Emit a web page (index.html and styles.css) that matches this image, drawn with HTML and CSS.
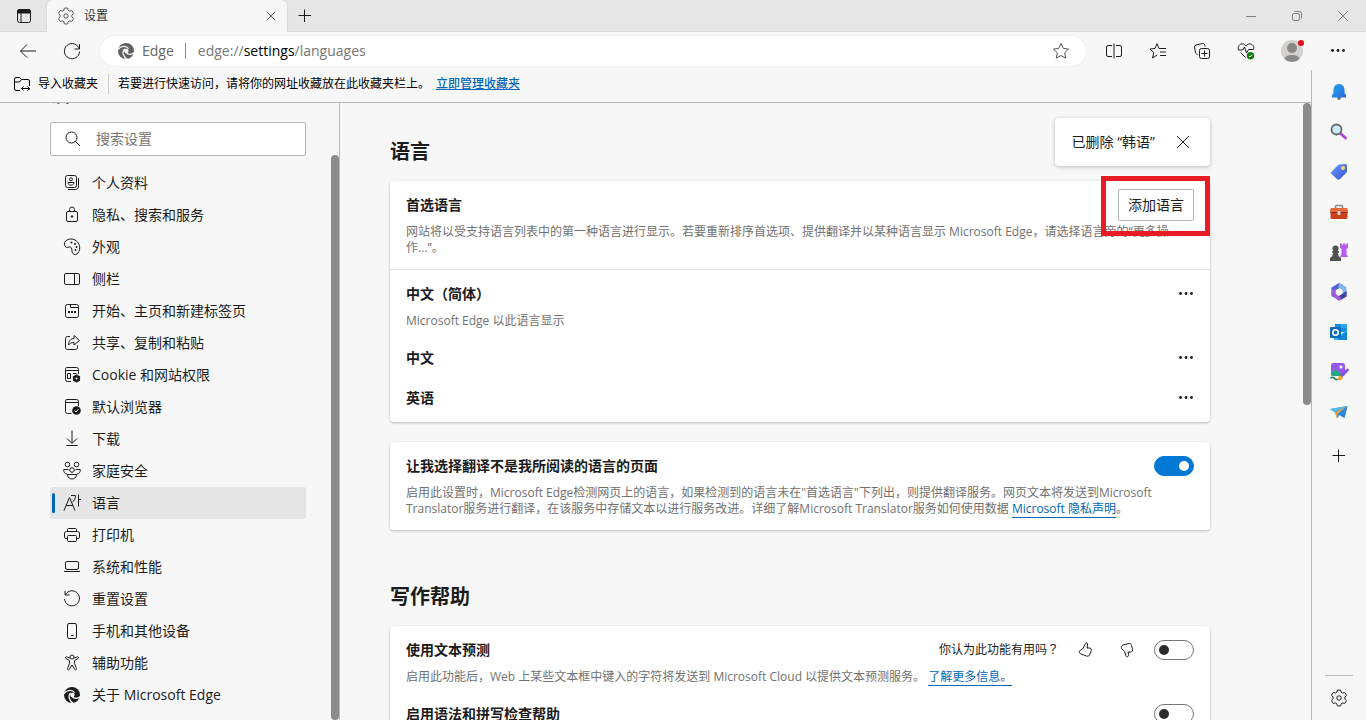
FILE: index.html
```html
<!DOCTYPE html>
<html lang="zh-CN">
<head>
<meta charset="utf-8">
<title>设置</title>
<link rel="stylesheet" href="styles.css">
</head>
<body>
<svg class="defs" aria-hidden="true">
  <symbol id="gear" viewBox="0 0 20 20"><path d="M8.3 2.2 Q10 1.8 11.7 2.2 L12.2 4.3 L13.6 5.1 L15.7 4.5 Q16.9 5.8 17.4 7.4 L15.9 9 V11 L17.4 12.6 Q16.9 14.2 15.7 15.5 L13.6 14.9 L12.2 15.7 L11.7 17.8 Q10 18.2 8.3 17.8 L7.8 15.7 L6.4 14.9 L4.3 15.5 Q3.1 14.2 2.6 12.6 L4.1 11 V9 L2.6 7.4 Q3.1 5.8 4.3 4.5 L6.4 5.1 L7.8 4.3 Z"/><circle cx="10" cy="10" r="2.2"/></symbol>
  <symbol id="dots" viewBox="0 0 20 20"><g fill="currentColor" stroke="none"><circle cx="4.5" cy="9.5" r="1.4"/><circle cx="10" cy="9.5" r="1.4"/><circle cx="15.5" cy="9.5" r="1.4"/></g></symbol>
  <symbol id="edge" viewBox="0 0 20 20"><circle cx="10" cy="10" r="8" fill="currentColor" stroke="none"/><path d="M2 8.5 C5 4.6 10.5 4.4 12.6 7.6 M8.6 8 C5.7 11 7 15.5 11.5 18.6 M10.2 11.3 C12 14.2 15.5 13.8 18.6 11.4" fill="none" stroke="#f7f7f7" stroke-width="1.3"/><path d="M8.2 9.6 C8.6 7.2 12.2 7 12.6 9.6 C12.7 11 11.6 11.5 11.7 12.6 C9.6 13 8.1 11.6 8.2 9.6Z" fill="#f7f7f7" stroke="none"/></symbol>
  <symbol id="plus" viewBox="0 0 20 20"><path d="M9.500 3.500V16M3.500 9.500H16"/></symbol>
  <symbol id="cross" viewBox="0 0 20 20"><path d="M4 4L16 16M16 4L4 16"/></symbol>
</svg>

<header class="titlebar">
  <button class="tab-menu" aria-label="标签页操作"><svg class="icon" viewBox="0 0 20 20"><rect x="3.500" y="3.500" width="13" height="13" rx="2"/><path d="M3.500 7V5.500A2 2 0 0 1 5.500 3.500H14.500A2 2 0 0 1 16.500 5.500V7Z" fill="currentColor"/><path d="M7 7V16.500"/></svg></button>
  <div class="tab">
    <svg class="icon soft"><use href="#gear"/></svg>
    <span class="tab-title">设置</span>
    <button class="tab-close" aria-label="关闭标签页"><svg class="icon small"><use href="#cross"/></svg></button>
  </div>
  <button class="new-tab" aria-label="新建标签页"><svg class="icon"><use href="#plus"/></svg></button>
  <div class="window-buttons">
    <button aria-label="最小化"><svg class="icon" viewBox="0 0 20 20"><path d="M5 10.500H15"/></svg></button>
    <button aria-label="还原"><svg class="icon" viewBox="0 0 20 20"><rect x="5.500" y="7.500" width="7" height="7" rx="1.500"/><path d="M7.500 5.500H12.500A2 2 0 0 1 14.500 7.500V12.500"/></svg></button>
    <button aria-label="关闭"><svg class="icon" viewBox="0 0 20 20"><path d="M5 5L15 15M15 5L5 15"/></svg></button>
  </div>
</header>

<div class="toolbar">
  <button class="tool" aria-label="返回"><svg class="icon" viewBox="0 0 20 20"><path d="M18 10H2.500M9 3.500L2.500 10L9 16.500"/></svg></button>
  <button class="tool" aria-label="刷新"><svg class="icon" viewBox="0 0 20 20"><path d="M17.300 8A7.600 7.600 0 1 0 17.600 10.500M17.500 3V8H12.500"/></svg></button>
  <div class="address">
    <svg class="icon gray"><use href="#edge"/></svg>
    <span class="site">Edge</span>
    <a class="url" href="edge://settings/languages">edge://<b>settings</b>/languages</a>
    <button class="star" aria-label="收藏"><svg class="icon soft" viewBox="0 0 20 20"><path d="M10 2.500L12.300 7.400L17.600 8.100L13.700 11.800L14.700 17.100L10 14.500L5.300 17.100L6.300 11.800L2.400 8.100L7.700 7.400Z"/></svg></button>
  </div>
  <button class="tool" aria-label="拆分窗口"><svg class="icon" viewBox="0 0 20 20"><path d="M10 2.500V17.500M8 4.500H4A1.500 1.500 0 0 0 2.500 6V14A1.500 1.500 0 0 0 4 15.500H8M12 4.500H16A1.500 1.500 0 0 1 17.500 6V14A1.500 1.500 0 0 1 16 15.500H12"/></svg></button>
  <button class="tool" aria-label="收藏夹"><svg class="icon" viewBox="0 0 20 20"><path d="M12 7.500H11L9 2.700L7 7.500L2 8L5.800 11.500L4.500 17L9 14M12 7.500H18M12 11H18M12 14.500H18"/></svg></button>
  <button class="tool" aria-label="集锦"><svg class="icon" viewBox="0 0 20 20"><path d="M5.500 13.500L4.500 13A2 2 0 0 1 3.500 11.500L2.500 6A2 2 0 0 1 4 4L10.500 2.500A2 2 0 0 1 12.800 4L13.100 5.500"/><rect x="7.500" y="7.500" width="10" height="10" rx="2"/><path d="M12.500 9.500V15.500M9.500 12.500H15.500"/></svg></button>
  <button class="tool" aria-label="浏览器概要"><svg class="icon" viewBox="0 0 20 20"><path d="M10 5C8 2 4.500 2.500 3 4.500C2 6 2 7.500 2.500 9H6.500L8.500 6L10.500 12L12.500 8.500H17.500C18 7 18 5.500 17 4.500C15.500 2.500 12 2 10 5ZM4.500 11.500L9.500 16.500"/><circle cx="14.500" cy="14.800" r="3.700" fill="#107c10" stroke="none"/><path d="M13 15L14 16L16 13.700" stroke="#fff"/></svg></button>
  <button class="tool profile" aria-label="个人资料"><svg class="avatar" viewBox="0 0 26 26"><circle cx="13" cy="13" r="11" fill="#d2d0ce"/><circle cx="13" cy="10" r="5" fill="#8a8886"/><path d="M5.500 21C6.500 15.500 19.500 15.500 20.500 21A11 11 0 0 1 5.500 21Z" fill="#8a8886"/><circle cx="22" cy="5" r="3" fill="#e00b1c"/></svg></button>
  <button class="tool profile" aria-label="设置及其他"><svg class="icon"><use href="#dots"/></svg></button>
</div>

<div class="workspace">
  <div class="page">
    <div class="favorites">
      <button class="import"><svg class="icon" viewBox="0 0 20 20"><path d="M8 16.500H4A1.500 1.500 0 0 1 2.500 15V5A1.500 1.500 0 0 1 4 3.500H7.500L9.500 5.500H16A1.500 1.500 0 0 1 17.500 7V12M2.500 8H7.500L9.500 5.500M17.500 14V15.500M9.500 14.500H17M11.500 12.500L9.500 14.500L11.500 16.500M15.500 12.500L17.500 14.500L15.500 16.500"/></svg>导入收藏夹</button>
      <span class="hint">若要进行快速访问，请将你的网址收藏放在此收藏夹栏上。</span>
      <a href="#favorites">立即管理收藏夹</a>
    </div>

    <div class="settings">
      <nav class="nav">
        <div class="nav-inner">
          <h2 class="nav-title">设置</h2>
          <label class="search"><svg class="icon" viewBox="0 0 20 20"><circle cx="8.500" cy="8.500" r="5.500"/><path d="M12.500 12.500L17 17"/></svg><input type="text" placeholder="搜索设置" aria-label="搜索设置"></label>
          <ul class="nav-list">
            <li><a href="#profiles"><svg class="icon" viewBox="0 0 20 20"><rect x="3.500" y="2.500" width="11" height="12" rx="2"/><path d="M16.500 5V14A3 3 0 0 1 13.500 16.500H6"/><circle cx="9" cy="6.300" r="1.500"/><path d="M6 9.500H12V10.500Q9 14 6 10.500Z"/></svg>个人资料</a></li>
            <li><a href="#privacy"><svg class="icon" viewBox="0 0 20 20"><rect x="4.500" y="6.500" width="11" height="10" rx="1.500"/><path d="M7.500 6.500V4.500A2.500 2.500 0 0 1 12.500 4.500V6.500"/><circle cx="10" cy="11.500" r=".8" fill="currentColor"/></svg>隐私、搜索和服务</a></li>
            <li><a href="#appearance"><svg class="icon" viewBox="0 0 20 20"><path d="M3 9C0 4 8 0 13 3C18 6 19 12 16 16C13 19 10 17 10 14C10 11 9 9.500 7 10C5.500 10.500 4 11 3 9Z"/><g fill="currentColor" stroke="none"><circle cx="9.500" cy="5.500" r="1"/><circle cx="13" cy="7" r="1"/><circle cx="14.500" cy="10" r="1"/><circle cx="13.500" cy="13" r="1"/></g></svg>外观</a></li>
            <li><a href="#sidebar"><svg class="icon" viewBox="0 0 20 20"><rect x="2.500" y="4.500" width="15" height="11" rx="1.500"/><path d="M12.500 4.500V15.500"/></svg>侧栏</a></li>
            <li><a href="#start"><svg class="icon" viewBox="0 0 20 20"><rect x="3.500" y="3.500" width="13" height="13" rx="2"/><path d="M8.500 3.500V6.500H16.500"/><g fill="currentColor" stroke="none"><rect x="6" y="10" width="2" height="2"/><rect x="9" y="10" width="2" height="2"/><rect x="12" y="10" width="2" height="2"/></g></svg>开始、主页和新建标签页</a></li>
            <li><a href="#share"><svg class="icon" viewBox="0 0 20 20"><path d="M8 3.500H5.500A2 2 0 0 0 3.500 5.500V14.500A2 2 0 0 0 5.500 16.500H13.500A2 2 0 0 0 15.500 14.500V12.500M12 5.500V2.500L17.500 7.500L12 12V9.500C9.500 9.500 8 10 6.500 12C6.500 8.500 8.500 5.500 12 5.500Z"/></svg>共享、复制和粘贴</a></li>
            <li><a href="#cookies"><svg class="icon" viewBox="0 0 20 20"><path d="M9 16.500H5.500A2 2 0 0 1 3.500 14.500V4.500A1.500 1.500 0 0 1 5 2.500H14.500A2 2 0 0 1 16.500 4.500V9M3.500 5.500H16.500M5.500 8.500H8.500V13.500H5.500ZM11 8.500H14.500"/><circle cx="14.500" cy="13.500" r="2.300" stroke-width="2.400"/><path d="M14.500 9.500V17.500M11 11.500L18 15.500M18 11.500L11 15.500" stroke-width="1.500"/><circle cx="14.500" cy="13.500" r="1" fill="#f7f7f7" stroke="none"/></svg>Cookie 和网站权限</a></li>
            <li><a href="#default"><svg class="icon" viewBox="0 0 20 20"><path d="M9.500 16.500H5.500A2 2 0 0 1 3.500 14.500V4A1.500 1.500 0 0 1 5 2.500H14.500A2 2 0 0 1 16.500 4.500V9M3.500 5.500H16.500"/><circle cx="14.500" cy="13.500" r="4.300" fill="currentColor" stroke="none"/><path d="M12.500 13.500L14 15L16.500 12.200" stroke="#f7f7f7"/></svg>默认浏览器</a></li>
            <li><a href="#downloads"><svg class="icon" viewBox="0 0 20 20"><path d="M10 1.500V14M5 9.500L10 14.500L15 9.500M4.500 16.500H15.500"/></svg>下载</a></li>
            <li><a href="#family"><svg class="icon" viewBox="0 0 20 20"><circle cx="5.500" cy="3.500" r="2.300"/><circle cx="14.500" cy="3.500" r="2.300"/><circle cx="10" cy="9" r="2.300"/><path d="M6.500 8.500H1.800C1.300 11 3 13 5 13M13.500 8.500H18.200C18.700 11 17 13 15 13M5.500 13.500H14.500C14.500 19.500 5.500 19.500 5.500 13.500Z"/></svg>家庭安全</a></li>
            <li><a class="current" href="#languages" aria-current="page"><svg class="icon" viewBox="0 0 20 20"><path d="M2 17.500L7.500 4.500L13 17.500M4 12.500H11M9 2.500H13.500C13.500 5.500 12.500 7.500 10.500 9M16.500 1.500V13.500M16.500 6.500H19"/></svg>语言</a></li>
            <li><a href="#printers"><svg class="icon" viewBox="0 0 20 20"><path d="M5.500 13.500H4A1.500 1.500 0 0 1 2.500 12V8A2 2 0 0 1 4.500 6.500H15.500A2 2 0 0 1 17.500 8V12A1.500 1.500 0 0 1 16 13.500H14.500M5.500 6.500V4.500A1 1 0 0 1 6.500 3.500H13.500A1 1 0 0 1 14.500 4.500V6.500"/><rect x="5.500" y="10.500" width="9" height="6" rx="1"/></svg>打印机</a></li>
            <li><a href="#system"><svg class="icon" viewBox="0 0 20 20"><rect x="3.500" y="4.500" width="13" height="8" rx="1.500"/><path d="M2 14.500H18"/></svg>系统和性能</a></li>
            <li><a href="#reset"><svg class="icon" viewBox="0 0 20 20"><path d="M3.500 5.500A7.500 7.500 0 1 1 2.500 10M3 2V6H7.500"/></svg>重置设置</a></li>
            <li><a href="#phone"><svg class="icon" viewBox="0 0 20 20"><rect x="5.500" y="2.500" width="9" height="15" rx="1.500"/><path d="M9 14.500H11.500"/></svg>手机和其他设备</a></li>
            <li><a href="#accessibility"><svg class="icon" viewBox="0 0 20 20"><circle cx="10" cy="4" r="2"/><path d="M8 5L4.500 3.800C3.300 3.700 3 5 3.800 5.500L7.500 7.500V10.500L5.500 15.500C5.300 17 6.800 17.300 7.300 16.500L10 12L12.700 16.500C13.200 17.300 14.700 17 14.500 15.500L12.500 10.500V7.500L16.200 5.500C17 5 16.700 3.700 15.500 3.800L12 5"/></svg>辅助功能</a></li>
            <li><a href="#about"><svg class="icon"><use href="#edge"/></svg>关于 Microsoft Edge</a></li>
          </ul>
        </div>
        <div class="thumb nav-thumb"></div>
      </nav>

      <main class="main">
        <div class="content">
          <h1 class="heading">语言</h1>
          <div class="toast" role="status">已删除 “韩语”<button aria-label="关闭"><svg class="icon"><use href="#cross"/></svg></button></div>

          <section class="card">
            <div class="row divided">
              <div class="head"><h3>首选语言</h3><button class="add">添加语言</button></div>
              <p class="desc">网站将以受支持语言列表中的第一种语言进行显示。若要重新排序首选项、提供翻译并以某种语言显示 Microsoft Edge，请选择语言旁的“更多操作...”。</p>
            </div>
            <div class="row">
              <div class="head"><h3>中文<span class="mid" lang="zh-TW">（</span>简体<span class="mid" lang="zh-TW">）</span></h3><button class="more" aria-label="中文（简体）更多操作"><svg class="icon"><use href="#dots"/></svg></button></div>
              <p class="desc">Microsoft Edge 以此语言显示</p>
            </div>
            <div class="row"><div class="head"><h3>中文</h3><button class="more" aria-label="中文更多操作"><svg class="icon"><use href="#dots"/></svg></button></div></div>
            <div class="row"><div class="head"><h3>英语</h3><button class="more" aria-label="英语更多操作"><svg class="icon"><use href="#dots"/></svg></button></div></div>
            <div class="marker"></div>
          </section>

          <section class="card">
            <div class="row">
              <div class="head"><h3><label for="translate">让我选择翻译不是我所阅读的语言的页面</label></h3><input class="switch" id="translate" type="checkbox" checked></div>
              <p class="desc">启用此设置时，Microsoft Edge检测网页上的语言，如果检测到的语言未在"首选语言"下列出，则提供翻译服务。网页文本将发送到Microsoft Translator服务进行翻译，在该服务中存储文本以进行服务改进。详细了解Microsoft Translator服务如何使用数据 <a href="#privacy-statement">Microsoft 隐私声明</a>。</p>
            </div>
          </section>

          <h2 class="heading next">写作帮助</h2>
          <section class="card">
            <div class="row">
              <div class="head"><h3><label for="predict">使用文本预测</label></h3>
                <div class="feedback"><span>你认为此功能有用吗<span class="mid" lang="zh-TW">？</span></span>
                  <button aria-label="有用"><svg class="icon" viewBox="0 0 20 20"><path d="M10.500 3.500C10.500 2 13 2.500 12.500 5L12 8H14.500C16.500 8 16.500 10 16 11.500L15 14C14.500 16 13.500 16.500 11.500 16L6 14C4.500 13.500 4 12 4.500 11L8 8.500Z"/></svg></button>
                  <button aria-label="没有用"><svg class="icon" viewBox="0 0 20 20"><path d="M9 16C9.500 17.500 12 17 11.500 14.500L11 12H13.500C15.500 12 16 10.500 15.500 8.500L14.500 5.500C14 3.500 13 3.200 11 3.700L6 5C4.500 5.500 4 7 4.500 8.500L7.500 11.500Z"/></svg></button>
                </div>
                <input class="switch" id="predict" type="checkbox"></div>
              <p class="desc">启用此功能后，Web 上某些文本框中键入的字符将发送到 Microsoft Cloud 以提供文本预测服务。 <a href="#learn-more">了解更多信息。</a></p>
            </div>
            <div class="row"><div class="head"><h3><label for="grammar">启用语法和拼写检查帮助</label></h3><input class="switch" id="grammar" type="checkbox"></div></div>
          </section>
        </div>
        <div class="thumb main-thumb"></div>
      </main>
    </div>
  </div>

  <aside class="sidebar">
    <button aria-label="通知"><svg class="app" viewBox="0 0 20 20"><defs><linearGradient id="blue" x1="0" y1="0" x2="1" y2="1"><stop offset="0" stop-color="#29a9ea"/><stop offset="1" stop-color="#2864e0"/></linearGradient></defs><path d="M8 15H12Q12 18 10 18Q8 18 8 15Z" fill="#777"/><path d="M3 15.500V13L4.500 11V8C4.500 0 15.500 0 15.500 8V11L17 13V15.500Z" fill="url(#blue)"/></svg></button>
    <button aria-label="搜索"><svg class="app" viewBox="0 0 20 20"><path d="M12 12L16.500 16" stroke="#b347df" stroke-width="3" stroke-linecap="round"/><circle cx="7.500" cy="7.500" r="5" fill="#cfeafa" stroke="#65696e" stroke-width="1.800"/></svg></button>
    <button aria-label="购物"><svg class="app" viewBox="0 0 20 20"><defs><linearGradient id="tag" x1="0" y1="0" x2="1" y2="1"><stop offset="0" stop-color="#6d9bfa"/><stop offset="1" stop-color="#3753d6"/></linearGradient></defs><path d="M10 2.500L16.500 2Q18 2 18 3.500V9Q18 10 17 11L11 17Q9.500 18.500 8 17L2.500 12Q1.500 11 2.500 9.800L8.500 3.500Z" fill="url(#tag)"/><circle cx="14" cy="6" r="2" fill="#ffd36a"/></svg></button>
    <button aria-label="工具"><svg class="app" viewBox="0 0 20 20"><path d="M6.500 7V4.500Q6.500 3.500 7.500 3.500H12.500Q13.500 3.500 13.500 4.500V7" fill="none" stroke="#888" stroke-width="1.600"/><rect x="1.500" y="6" width="17" height="11" rx="1.500" fill="#c9421c"/><path d="M1.500 7.500Q1.500 6 3 6H17Q18.500 6 18.500 7.500V10H1.500Z" fill="#e4683a"/><path d="M1.500 10.500H18.500" stroke="#8d2c12"/><rect x="8.500" y="9" width="3" height="4" rx="1" fill="#ddd"/></svg></button>
    <button aria-label="游戏"><svg class="app" viewBox="0 0 20 20"><path d="M11 1.500H13V3H14V1.500H16.300V3H17.300V1.500H19V6L17.500 7V12L19 15H11L12.500 12V7L11 6Z" fill="#b95af0"/><g fill="#505050"><circle cx="6.500" cy="6.500" r="3"/><path d="M3 9H10V10.500H9L9.500 14L12 16V19H1V16L3.500 14L4 10.500H3Z"/></g></svg></button>
    <button aria-label="Microsoft 365"><svg class="app" viewBox="0 0 20 20"><path d="M10 1L2.500 5.500V14L6 16L7 8L14 4.500V3Z" fill="#4a69d6"/><path d="M10 1L17.500 5V13L14 15.500L13.500 8L9.500 5.500Z" fill="#7fb6eb"/><path d="M2.500 13L10 19L17.500 14.500V10L9.500 14L6.500 11.500V6L2.500 9Z" fill="#a05bd8"/><path d="M17.500 9V14.500L12.500 17.500L10 14L13.500 11.500Z" fill="#3f49a5"/><path d="M10 6.500L13.200 8.300V11.700L10 13.500L6.800 11.700V8.300Z" fill="#f7f7f7"/></svg></button>
    <button aria-label="Outlook"><svg class="app" viewBox="0 0 20 20"><path d="M6 2H18V10H6Z" fill="#1490df"/><path d="M12 2H18V6H12Z" fill="#28a8ea"/><path d="M5 8L12 12L18 8V18H5Z" fill="#38b4ed"/><path d="M8 18L18 9V18Z" fill="#1685d1"/><rect x="1" y="5" width="11" height="11" rx="1" fill="#0f6cbd"/><circle cx="6.500" cy="10.500" r="2.700" fill="none" stroke="#fff" stroke-width="1.600"/></svg></button>
    <button aria-label="图像创建器"><svg class="app" viewBox="0 0 20 20"><rect x="2" y="1" width="14" height="13" rx="2.500" fill="#9857ed"/><circle cx="12" cy="5" r="1.600" fill="#fff"/><path d="M2 11L6.500 7L14 14H4Q2 14 2 12Z" fill="#23a982"/><path d="M1.500 16Q4 14.500 5.500 16.500T9 17" fill="none" stroke="#218a57" stroke-width="1.500"/><path d="M12 14.500L18.500 8" stroke="#8050df" stroke-width="2.600" stroke-linecap="round"/><path d="M9 18Q9 13 12 13.500L14 15.500Q13.500 18.500 9 18Z" fill="#f6a52a"/></svg></button>
    <button aria-label="投递"><svg class="app" viewBox="0 0 20 20"><path d="M1 7L18.500 4L15.500 16L10.500 13L8 16.500L6 10.500Z" fill="#35a0dc"/><path d="M1 7L18.500 4L6 10.500Z" fill="#55b9e6"/><path d="M6 10.500L18.500 4L8.500 12L8 16.500Z" fill="#eea43a"/><path d="M9 12L18.500 4L15.500 16Z" fill="#2b87dd"/></svg></button>
    <button class="customize" aria-label="自定义"><svg class="icon"><use href="#plus"/></svg></button>
    <div class="side-bottom"><button aria-label="侧栏设置"><svg class="icon"><use href="#gear"/></svg></button></div>
  </aside>
</div>
</body>
</html>
```
FILE: styles.css
```css
* { box-sizing: border-box; }
body {
  margin: 0;
  height: 100vh;
  overflow: hidden;
  display: flex;
  flex-direction: column;
  background: #f7f7f7;
  color: #1b1b1b;
  font: 14px/20px "Open Sans", "Noto Sans CJK SC", sans-serif;
}
h1, h2, h3, p, ul { margin: 0; padding: 0; }
button {
  padding: 0;
  border: 0;
  background: none;
  color: inherit;
  font: inherit;
  display: flex;
  align-items: center;
  justify-content: center;
}
.defs { display: none; }
.icon {
  width: 20px;
  height: 20px;
  flex: none;
  fill: none;
  stroke: currentColor;
}
.icon.small { width: 14px; height: 14px; }
.icon.soft { color: #555; }
.icon.gray { color: #5f5f5f; }

.titlebar {
  flex: none;
  height: 32px;
  display: flex;
  background: #e6e6e6;
  border-bottom: 1px solid #d8d8d8;
}
.tab-menu { width: 47px; }
.tab {
  width: 240px;
  height: 32px;
  padding: 0 8px 0 9px;
  display: flex;
  align-items: center;
  gap: 8px;
  background: #f7f7f7;
  border-radius: 6px 6px 0 0;
  box-shadow: 0 0 2px #bbb;
  clip-path: inset(-2px -2px 0 -2px);
}
.tab-title { flex: 1; font-size: 12px; color: #333; }
.tab-close { width: 16px; height: 20px; }
.new-tab { width: 36px; }
.window-buttons { margin-left: auto; display: flex; color: #808080; }
.window-buttons button { width: 46px; }

.toolbar {
  flex: none;
  height: 38px;
  padding: 0 6px;
  display: flex;
  align-items: center;
}
.tool { width: 44px; height: 36px; flex: none; }
.profile { margin-left: 2px; }
.avatar { width: 26px; height: 26px; }
.address {
  flex: 1;
  height: 30px;
  margin: 0 6px;
  padding: 0 15px 0 16px;
  display: flex;
  align-items: center;
  border-radius: 15px;
  background: #fff;
  box-shadow: 0 0 2px #e0e0e0;
}
.site {
  margin: 0 12px 0 6px;
  padding-right: 11px;
  line-height: 16px;
  border-right: 1px solid #888;
  color: #666;
}
.url { flex: 1; color: #767676; text-decoration: none; }
.url b { font-weight: 400; color: #000; }
.star { width: 20px; height: 20px; }

.workspace { flex: 1; min-height: 0; display: flex; }
.page { flex: 1; min-width: 0; display: flex; flex-direction: column; }
.favorites {
  flex: none;
  height: 33px;
  padding: 0 12px 4px;
  display: flex;
  align-items: center;
  font-size: 12px;
  color: #000;
  border-bottom: 1px solid #b8b8b8;
}
.import { gap: 6px; padding-right: 10px; line-height: 16px; border-right: 1px solid #ccc; }
.hint { margin: 0 6px 0 9px; }
.favorites a { color: #0067b8; font-weight: 500; }

.settings { flex: 1; min-height: 0; display: flex; overflow: hidden; }
.nav {
  width: 340px;
  flex: none;
  display: flex;
  border-right: 1px solid #b8b8b8;
}
.nav-inner { flex: 1; padding: 0 25px 0 50px; }
.nav-title { margin: -21px 0 14px; font-size: 20px; line-height: 26px; }
.search {
  height: 34px;
  padding-left: 12px;
  display: flex;
  align-items: center;
  gap: 13px;
  border: 1px solid #b5b5b5;
  border-radius: 2px;
  background: #fff;
}
.search input {
  flex: 1;
  min-width: 0;
  padding: 0;
  border: 0;
  outline: 0;
  font: inherit;
  background: none;
}
.search input::placeholder { color: #767676; }
.nav-list { margin-top: 11px; list-style: none; }
.nav-list a {
  height: 32px;
  padding-left: 12px;
  display: flex;
  align-items: center;
  gap: 10px;
  color: inherit;
  text-decoration: none;
}
.nav-list .current {
  position: relative;
  background: #e5e5e5;
  border-radius: 2px;
}
.current::before {
  content: "";
  position: absolute;
  left: 2px;
  top: 6px;
  width: 3px;
  height: 20px;
  border-radius: 2px;
  background: #0067b8;
}
.thumb { width: 8px; flex: none; border-radius: 4px; background: #8b8b8b; }
.nav-thumb { margin-top: 52px; }
.main-thumb { height: 49%; margin-left: auto; }

.main { flex: 1; min-width: 0; display: flex; }
.content { position: relative; flex: 1; max-width: 870px; padding: 36px 0 0 50px; }
.heading { margin-bottom: 16px; font-size: 20px; line-height: 26px; }
.next { margin-top: 54px; }
.toast {
  position: absolute;
  right: 0;
  top: 15px;
  height: 48px;
  padding: 0 17px;
  display: flex;
  align-items: center;
  gap: 18px;
  border-radius: 4px;
  background: #fff;
  box-shadow: 0 1px 4px rgba(0, 0, 0, .24);
}
.card {
  position: relative;
  padding-bottom: 8px;
  border-radius: 4px;
  background: #fff;
  box-shadow: 0 1px 3px rgba(0, 0, 0, .24);
}
.card + .card { margin-top: 20px; }
.row { padding: 8px 16px 0; }
.divided { padding-bottom: 8px; border-bottom: 1px solid #e5e5e5; }
.head { height: 32px; display: flex; align-items: center; }
.head h3 { flex: 1; font-size: 14px; font-weight: 700; }
.desc {
  margin: 3px 0 5px;
  padding-right: 24px;
  font-size: 12px;
  line-height: 16px;
  color: #717171;
}
.desc a { color: #0067b8; text-decoration: none; border-bottom: 1px solid #0067b8; }
.mid { font-family: "Open Sans", "Noto Sans CJK TC", sans-serif; }
.add {
  width: 76px;
  height: 32px;
  border: 1px solid #b5b5b5;
  border-radius: 2px;
}
.more { width: 16px; }
.marker {
  position: absolute;
  right: 0;
  top: -5px;
  width: 109px;
  height: 60px;
  border: 5px solid #e81c24;
  pointer-events: none;
}
.feedback { display: flex; align-items: center; gap: 22px; margin-right: 17px; font-size: 12px; }
.feedback button { width: 20px; height: 20px; }
.feedback button:first-of-type { margin-left: -6px; }
.switch {
  appearance: none;
  width: 40px;
  height: 20px;
  margin: 0;
  padding: 0 4px;
  display: flex;
  align-items: center;
  border: 1px solid #767676;
  border-radius: 10px;
  background: #fff;
}
.switch::before {
  content: "";
  width: 10px;
  height: 10px;
  border-radius: 5px;
  background: #2b2b2b;
}
.switch:checked { justify-content: flex-end; background: #0078d4; border-color: #0078d4; }
.switch:checked::before { background: #fff; }

.sidebar {
  width: 55px;
  flex: none;
  padding-top: 2px;
  display: flex;
  flex-direction: column;
  align-items: center;
  border-left: 1px solid #b8b8b8;
}
.sidebar button { width: 40px; height: 40px; flex: none; }
.app { width: 20px; height: 20px; }
.sidebar .customize { margin-top: 4px; }
.side-bottom {
  width: 28px;
  margin-top: auto;
  padding: 2px 0;
  display: flex;
  justify-content: center;
  border-top: 1px solid #b8b8b8;
}
```
